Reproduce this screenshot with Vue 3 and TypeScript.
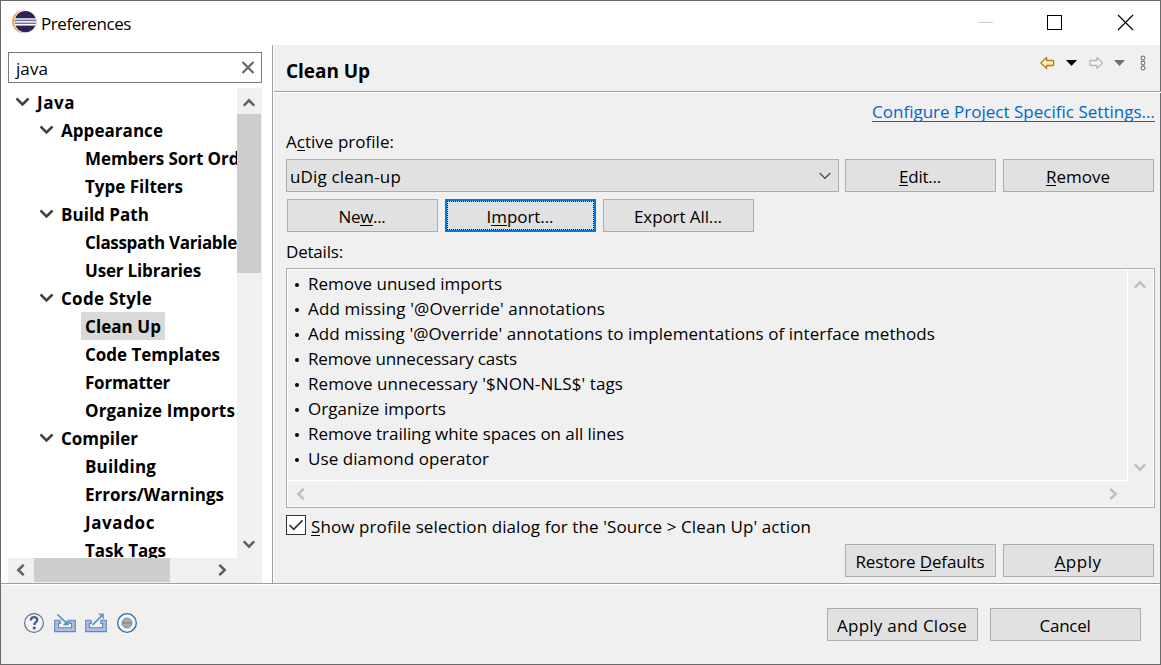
<script setup lang="ts">
import { ref } from 'vue'
import type { Directive } from 'vue'

interface TreeRow { label: string; level: number; width: number; open?: boolean }

// Tracks a label out (or in) so that it occupies the given number of pixels.
const vFit: Directive<HTMLElement, number> = {
  mounted(el, { value }) {
    const count = (el.textContent ?? '').length
    const natural = el.getBoundingClientRect().width
    el.style.letterSpacing = `${(value - natural) / count}px`
  },
}

const filter = ref('java')
const selected = ref('Clean Up')
const askProfile = ref(true)

const tree: TreeRow[] = [
  { label: 'Java', level: 0, width: 38, open: true },
  { label: 'Appearance', level: 1, width: 102, open: true },
  { label: 'Members Sort Order', level: 2, width: 172 },
  { label: 'Type Filters', level: 2, width: 98 },
  { label: 'Build Path', level: 1, width: 88, open: true },
  { label: 'Classpath Variables', level: 2, width: 160 },
  { label: 'User Libraries', level: 2, width: 116 },
  { label: 'Code Style', level: 1, width: 91, open: true },
  { label: 'Clean Up', level: 2, width: 76 },
  { label: 'Code Templates', level: 2, width: 135 },
  { label: 'Formatter', level: 2, width: 85 },
  { label: 'Organize Imports', level: 2, width: 150 },
  { label: 'Compiler', level: 1, width: 77, open: true },
  { label: 'Building', level: 2, width: 71 },
  { label: 'Errors/Warnings', level: 2, width: 139 },
  { label: 'Javadoc', level: 2, width: 70 },
  { label: 'Task Tags', level: 2, width: 81 },
]

const details = [
  { text: 'Remove unused imports', width: 194 },
  { text: "Add missing '@Override' annotations", width: 297 },
  { text: "Add missing '@Override' annotations to implementations of interface methods", width: 627 },
  { text: 'Remove unnecessary casts', width: 209 },
  { text: "Remove unnecessary '$NON-NLS$' tags", width: 315 },
  { text: 'Organize imports', width: 138 },
  { text: 'Remove trailing white spaces on all lines', width: 316 },
  { text: 'Use diamond operator', width: 181 },
]
</script>

<template>
  <div class="window">
    <header class="titlebar">
      <svg class="logo" width="26" height="24" viewBox="0 0 26 24">
        <circle cx="11.6" cy="11.6" r="11.4" fill="#f7941e" />
        <circle cx="13.4" cy="11.6" r="11.6" fill="#fff" />
        <circle cx="13.4" cy="11.6" r="10.700" fill="#2c2255" />
        <path d="M3 9.2h21.200M2.700 12h21.800M3 14.800h21.200" stroke="#8f8bb0" stroke-width="2.400" />
        <path d="M3 9h21.200M2.700 11.800h21.800M3 14.600h21.200" stroke="#fff" stroke-width="1.200" />
      </svg>
      <span v-fit="90" class="text">Preferences</span>
      <svg class="window-controls" width="160" height="18" viewBox="0 0 160 18" fill="none">
        <path d="M0 8.500h15" stroke="#ccc" />
        <rect x="69.500" y="1.500" width="14" height="14" stroke="#000" />
        <path d="M140 1l15 15M155 1l-15 15" stroke="#000" stroke-width="1.200" />
      </svg>
    </header>

    <main class="body">
      <aside class="sidebar">
        <div class="filter">
          <span v-fit="32" class="text">{{ filter }}</span>
          <svg width="14" height="14" viewBox="0 0 14 14" @click="filter = ''">
            <path d="M1.500 1l11 11M12.500 1l-11 11" stroke="#666" stroke-width="2.200" />
          </svg>
        </div>
        <div class="tree-pane">
          <div class="tree">
            <div v-for="row in tree" :key="row.label" class="row" :class="'level-' + row.level" @click="selected = row.label">
              <svg v-if="row.open" class="twisty" width="14" height="10" viewBox="0 0 14 10">
                <path d="M.500 1.500l6 6 6-6" fill="none" stroke="#404040" stroke-width="2.600" />
              </svg>
              <div class="cell" :class="{ selected: row.label === selected }">
                <span v-fit="row.width" class="text">{{ row.label }}</span>
              </div>
            </div>
          </div>
          <div class="vbar">
            <svg class="up" width="12" height="9" viewBox="0 0 12 9"><path d="M.800 7.700l5.200-5.400 5.200 5.400" fill="none" stroke="#606060" stroke-width="2.500" /></svg>
            <div class="vthumb"></div>
            <svg class="down" width="12" height="9" viewBox="0 0 12 9"><path d="M.800 1.300l5.200 5.400 5.200-5.400" fill="none" stroke="#606060" stroke-width="2.500" /></svg>
          </div>
          <div class="hbar">
            <svg class="left" width="9" height="12" viewBox="0 0 9 12"><path d="M7.700.800l-5.400 5.200 5.400 5.200" fill="none" stroke="#606060" stroke-width="2.500" /></svg>
            <div class="hthumb"></div>
            <svg class="right" width="9" height="12" viewBox="0 0 9 12"><path d="M1.300.800l5.400 5.200-5.400 5.200" fill="none" stroke="#606060" stroke-width="2.500" /></svg>
          </div>
        </div>
      </aside>

      <section class="page">
        <div class="page-head">
          <h1><span v-fit="84" class="text">Clean Up</span></h1>
          <svg class="history" width="110" height="18" viewBox="0 0 110 18">
            <defs>
              <linearGradient id="gold" x1="0" y1="0" x2="1" y2="1"><stop offset="0" stop-color="#fff" /><stop offset="1" stop-color="#ffe9a0" /></linearGradient>
            </defs>
            <path d="M.900 9l5.700-5.500v3h6.100q1 0 1 1v3q0 1-1 1H6.600v3z" fill="url(#gold)" stroke="#b87a0c" stroke-width="1.300" stroke-linejoin="round" />
            <path d="M26 6h11l-5.500 6z" fill="#000" />
            <path d="M62.700 9L57 3.500v3h-6.100q-1 0-1 1v3q0 1 1 1H57v3z" fill="#f6f6f6" stroke="#b5b5b5" stroke-width="1.300" stroke-linejoin="round" />
            <path d="M74 6h11l-5.500 6z" fill="#707070" />
            <g fill="#f8f8f8" stroke="#777" stroke-width="1.100"><circle cx="103" cy="4" r="1.900" /><circle cx="103" cy="9" r="1.900" /><circle cx="103" cy="14" r="1.900" /></g>
          </svg>
        </div>

        <div class="page-body">
          <div class="link-line"><a v-fit="283" class="text link">Configure Project Specific Settings...</a></div>
          <div class="label active"><span v-fit="108" class="text">A<u>c</u>tive profile:</span></div>
          <div class="profile-line">
            <div class="combo">
              <span v-fit="111" class="text">uDig clean-up</span>
              <svg width="12" height="8" viewBox="0 0 12 8"><path d="M.700 1l5.300 5.300L11.300 1" fill="none" stroke="#505050" stroke-width="1.300" /></svg>
            </div>
            <button class="btn"><span v-fit="42" class="text"><u>E</u>dit...</span></button>
            <button class="btn"><span v-fit="64" class="text"><u>R</u>emove</span></button>
          </div>
          <div class="profile-actions">
            <button class="btn"><span v-fit="47" class="text">Ne<u>w</u>...</span></button>
            <button class="btn focused"><span v-fit="67" class="text">I<u>m</u>port...</span></button>
            <button class="btn"><span v-fit="88" class="text">Export All...</span></button>
          </div>
          <div class="label"><span v-fit="57" class="text">Details:</span></div>
          <div class="details">
            <ul>
              <li v-for="item in details" :key="item.text"><span class="bullet"></span><span v-fit="item.width" class="text">{{ item.text }}</span></li>
            </ul>
            <div class="dv">
              <svg width="12" height="9" viewBox="0 0 12 9"><path d="M.800 7.700l5.200-5.400 5.200 5.400" fill="none" stroke="#bfbfbf" stroke-width="2.500" /></svg>
              <svg width="12" height="9" viewBox="0 0 12 9"><path d="M.800 1.300l5.200 5.400 5.200-5.400" fill="none" stroke="#bfbfbf" stroke-width="2.500" /></svg>
            </div>
            <div class="dh">
              <svg width="9" height="12" viewBox="0 0 9 12"><path d="M7.700.800l-5.400 5.200 5.400 5.200" fill="none" stroke="#bfbfbf" stroke-width="2.500" /></svg>
              <svg width="9" height="12" viewBox="0 0 9 12"><path d="M1.300.800l5.400 5.200-5.400 5.200" fill="none" stroke="#bfbfbf" stroke-width="2.500" /></svg>
            </div>
          </div>
          <div class="check" @click="askProfile = !askProfile">
            <svg width="20" height="20" viewBox="0 0 20 20">
              <rect x=".5" y=".5" width="19" height="19" fill="#fff" stroke="#333" />
              <path v-if="askProfile" d="M3.500 10l4.200 4.300L16.500 5.300" fill="none" stroke="#333" stroke-width="1.700" />
            </svg>
            <span v-fit="500" class="text"><u>S</u>how profile selection dialog for the 'Source &gt; Clean Up' action</span>
          </div>
          <div class="page-actions">
            <button class="btn"><span v-fit="129" class="text">Restore <u>D</u>efaults</span></button>
            <button class="btn"><span v-fit="47" class="text"><u>A</u>pply</span></button>
          </div>
        </div>
      </section>
    </main>

    <footer class="footer">
      <div class="tools">
        <svg width="22" height="22" viewBox="0 0 22 22">
          <circle cx="11" cy="11" r="9.400" fill="#f4f5f8" stroke="#5f6d8c" stroke-width="1.200" />
          <path d="M7.800 8.400c0-4.300 6.500-4.300 6.500-.600 0 2.400-3 2.500-3 5.300" fill="none" stroke="#4c5e86" stroke-width="2.400" />
          <rect x="9.900" y="14.600" width="2.700" height="2.700" fill="#4c5e86" />
        </svg>
        <svg width="22" height="20" viewBox="0 0 22 20">
          <path d="M.700 7.200h5.500v3.200H4.400v4.300h13.200v-4.300h-1.800V7.200h5.500v11.400H.700z" fill="#a9bfe3" stroke="#6684bc" stroke-width="1.100" />
          <path d="M3.500 1.500l9.500 9" fill="none" stroke="#4b91bd" stroke-width="1.700" /><path d="M14.700 6.300v6h-6z" fill="#4b91bd" />
        </svg>
        <svg width="22" height="20" viewBox="0 0 22 20">
          <path d="M.700 7.200h5.500v3.200H4.400v4.300h13.200v-4.300h-1.800V7.200h5.500v11.400H.700z" fill="#a9bfe3" stroke="#6684bc" stroke-width="1.100" />
          <path d="M7.500 12L17 2.500" fill="none" stroke="#4b91bd" stroke-width="1.700" /><path d="M13 .500h6v6z" fill="#68a4c8" />
        </svg>
        <svg width="22" height="22" viewBox="0 0 22 22">
          <circle cx="11" cy="11" r="9.300" fill="#f1f9fd" stroke="#2e6c9e" stroke-width="1.300" />
          <circle cx="11" cy="11" r="4.900" fill="#aaa" stroke="#858585" /><path d="M6.500 11h9" stroke="#888" stroke-width="1.500" />
        </svg>
      </div>
      <div class="closers">
        <button class="btn"><span v-fit="130" class="text">Apply and Close</span></button>
        <button class="btn"><span v-fit="51" class="text">Cancel</span></button>
      </div>
    </footer>
  </div>
</template>

<style>
body { margin: 0; overflow: hidden; }
</style>

<style scoped>
* { box-sizing: border-box; }
svg { display: block; flex: none; }
.window { width: 1161px; height: 665px; border: 1px solid #69696b; background: #f0f0f0; color: #000; display: flex; flex-direction: column; font: 17px/24px "Open Sans", "Noto Sans", sans-serif; font-kerning: none; font-variant-ligatures: none; }
.text { display: inline-block; white-space: nowrap; margin-top: 1px; }
u { text-decoration: none; background: linear-gradient(#000, #000) 0 20px / 100% 1px no-repeat; }
.titlebar { height: 44px; flex: none; background: #fff; display: flex; align-items: flex-start; padding-top: 9px; }
.logo { margin: 0 3px 0 11px; }
.titlebar .text { margin-top: 2px; }
.window-controls { margin: 4px 22px 0 auto; }
.body { height: 538px; flex: none; display: flex; }
.sidebar { width: 272px; flex: none; background: #fff; border-right: 1px solid #a0a0a0; padding: 7px 0 0 7px; }
.filter { width: 254px; height: 31px; border: 1px solid #7a7a7a; display: flex; justify-content: space-between; padding: 3px 6px 0 7px; }
.filter svg { margin-top: 5px; }
.tree-pane { margin-top: 5px; width: 254px; display: grid; grid-template: 470px 25px / 229px 25px; }
.tree { overflow: hidden; font-weight: 700; font-size: 17px; }
.row { height: 28px; display: flex; position: relative; }
.level-0 { padding-left: 25px; }
.level-1 { padding-left: 49px; }
.level-2 { padding-left: 73px; }
.twisty { position: absolute; left: 8px; top: 9px; }
.level-1 .twisty { left: 32px; }
.cell { height: 28px; padding: 2px 4px 0; flex: none; }
.cell.selected { background: #d9d9d9; }
.vbar { grid-row: 1 / 3; grid-column: 2; background: #f0f0f0; display: flex; flex-direction: column; }
.up { margin: 10px 0 7px 6px; }
.vthumb { width: 24px; height: 159px; background: #cdcdcd; }
.down { margin: auto 0 34px 6px; }
.hbar { background: #f0f0f0; display: flex; }
.left { margin: 6px 9px 0 8px; }
.hthumb { width: 136px; height: 24px; background: #cdcdcd; }
.right { margin: 6px 10px 0 auto; }
.page { flex: 1; border-left: 1px solid #fff; }
.page-head { height: 48px; border-bottom: 1px solid #fff; box-shadow: inset 0 -1px #a0a0a0; display: flex; justify-content: space-between; padding: 14px 11px 0 12px; }
h1 { margin: 0; font-size: 19px; line-height: 24px; }
h1 .text { margin-top: 0; }
.history { margin-top: -5px; }
.page-body { padding: 6px 6px 0 12px; }
.link-line { height: 24px; text-align: right; }
.link { color: #06c; background: linear-gradient(#06c, #06c) 0 21px / 100% 1px no-repeat; }
.label { height: 24px; }
.active { margin-top: 6px; }
.profile-line { display: flex; margin-top: 6px; }
.combo { width: 553px; height: 33px; border: 1px solid #adadad; background: #e1e1e1; display: flex; justify-content: space-between; padding: 4px 7px 0 3px; margin-right: 6px; }
.combo svg { margin-top: 8px; }
.btn { width: 151px; height: 33px; border: 1px solid #adadad; background: #e1e1e1; font: inherit; font-kerning: none; color: inherit; padding: 3px 0 0; display: flex; justify-content: center; align-items: flex-start; border-radius: 0; }
.btn .text { margin: 2px 1px 0 0; }
.btn + .btn { margin-left: 7px; }
.focused { border: 2px solid #0078d7; padding-top: 2px; outline: 1px dotted #000; outline-offset: -3px; }
.profile-actions { display: flex; margin: 7px 0 0 1px; }
.profile-actions + .label { margin-top: 7px; }
.details { width: 869px; height: 240px; margin-top: 5px; border: 1px solid #adadb0; box-shadow: inset 0 0 0 1px #fff; padding: 1px; display: grid; grid-template: 211px 25px / 840px 25px; }
ul { list-style: none; margin: 0; padding: 1px 0 0 7px; border-right: 1px solid #fff; border-bottom: 1px solid #fff; }
li { height: 25px; display: flex; align-items: flex-start; }
.bullet { width: 4px; height: 4px; border-radius: 50%; background: #000; margin: 12px 9px 0 0; }
.dv { display: flex; flex-direction: column; justify-content: space-between; padding: 10px 0 9px 6px; }
.dh { display: flex; justify-content: space-between; padding: 7px 10px 0 8px; }
.check { display: flex; margin-top: 7px; height: 24px; }
.check .text { margin: 0 0 0 5px; }
.page-actions { display: flex; justify-content: flex-end; margin: 5px 1px 0 0; }
.footer { flex: 1; border-top: 1px solid #a0a0a0; box-shadow: inset 0 1px #fff; display: flex; justify-content: space-between; padding: 24px 19px 0 22px; }
.tools { display: flex; gap: 9px; align-items: flex-start; margin-top: 4px; }
.tools svg:nth-child(2), .tools svg:nth-child(3) { margin-top: 1px; }
.closers { display: flex; align-items: flex-start; }
.closers .btn + .btn { margin-left: 12px; }
</style>
